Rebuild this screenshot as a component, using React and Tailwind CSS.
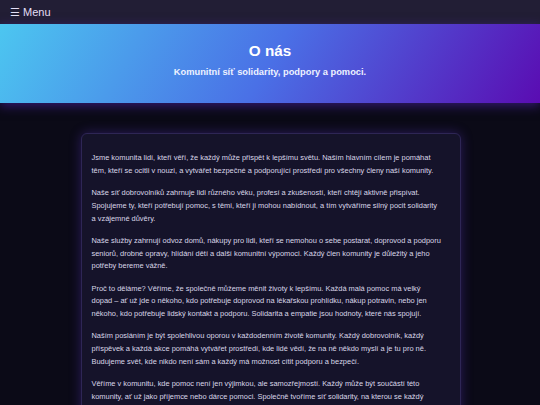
import React from 'react';

const paragraphs = [
  'Jsme komunita lidí, kteří věří, že každý může přispět k lepšímu světu. Naším hlavním cílem je pomáhat těm, kteří se ocitli v nouzi, a vytvářet bezpečné a podporující prostředí pro všechny členy naší komunity.',
  'Naše síť dobrovolníků zahrnuje lidi různého věku, profesí a zkušeností, kteří chtějí aktivně přispívat. Spojujeme ty, kteří potřebují pomoc, s těmi, kteří ji mohou nabídnout, a tím vytváříme silný pocit solidarity a vzájemné důvěry.',
  'Naše služby zahrnují odvoz domů, nákupy pro lidi, kteří se nemohou o sebe postarat, doprovod a podporu seniorů, drobné opravy, hlídání dětí a další komunitní výpomoci. Každý člen komunity je důležitý a jeho potřeby bereme vážně.',
  'Proč to děláme? Věříme, že společně můžeme měnit životy k lepšímu. Každá malá pomoc má velký dopad – ať už jde o někoho, kdo potřebuje doprovod na lékařskou prohlídku, nákup potravin, nebo jen někoho, kdo potřebuje lidský kontakt a podporu. Solidarita a empatie jsou hodnoty, které nás spojují.',
  'Naším posláním je být spolehlivou oporou v každodenním životě komunity. Každý dobrovolník, každý příspěvek a každá akce pomáhá vytvářet prostředí, kde lidé vědí, že na ně někdo myslí a je tu pro ně. Budujeme svět, kde nikdo není sám a každý má možnost cítit podporu a bezpečí.',
  'Věříme v komunitu, kde pomoc není jen výjimkou, ale samozřejmostí. Každý může být součástí této komunity, ať už jako příjemce nebo dárce pomoci. Společně tvoříme síť solidarity, na kterou se každý může spolehnout.',
];

export default function App() {
  return (
    <div className="min-h-screen bg-[#0b0a17] font-['Liberation_Sans',Arial,sans-serif] text-[#d9d6e8]">
      {/* Navbar */}
      <nav className="h-6 bg-[#221e35] flex items-center px-2.5">
        <span className="text-[11px] text-[#e4def5]">☰ Menu</span>
      </nav>

      {/* Header */}
      <header className="h-[79px] bg-linear-[120deg] from-[#4cc6f0] via-[#4a70e6] to-[#5a0cb2] flex flex-col items-center justify-center shadow-[0_3px_10px_rgba(90,40,200,0.5)]">
        <h1 className="text-[15.3px] font-bold text-white leading-none -mt-[4px]">O nás</h1>
        <p className="text-[9.3px] font-bold text-[#eef2ff] mt-[8px]">Komunitní síť solidarity, podpory a pomoci.</p>
      </header>

      {/* Content */}
      <main className="pt-[30px] flex justify-center">
        <section className="w-[380px] ml-[1px] bg-[#15132a] border border-[#2e2655] rounded-md shadow-[0_0_12px_rgba(100,60,220,0.35)] pl-[10px] pr-[17.5px] pt-[18px] pb-4">
          {paragraphs.map((p, i) => (
            <p key={i} className="text-[7.45px] leading-[12.8px] mb-[9.4px]">
              {p}
            </p>
          ))}
        </section>
      </main>
    </div>
  );
}
